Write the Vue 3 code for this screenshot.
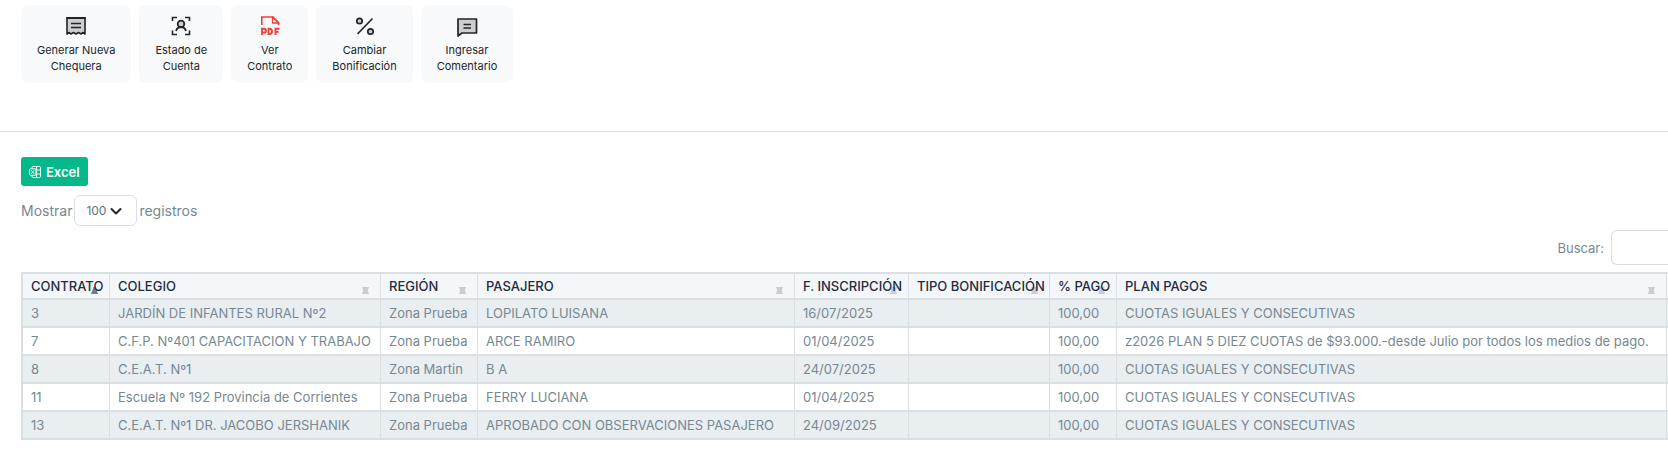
<script setup>
import { ref } from 'vue'

const actions = [
  { id: 'checkbook', lines: ['Generar Nueva', 'Chequera'] },
  { id: 'account', lines: ['Estado de', 'Cuenta'] },
  { id: 'pdf', lines: ['Ver', 'Contrato'] },
  { id: 'percent', lines: ['Cambiar', 'Bonificación'] },
  { id: 'comment', lines: ['Ingresar', 'Comentario'] },
]

const pageSize = ref('100')
const search = ref('')

const columns = [
  { key: 'contrato', label: 'CONTRATO', sorted: true },
  { key: 'colegio', label: 'COLEGIO' },
  { key: 'region', label: 'REGIÓN' },
  { key: 'pasajero', label: 'PASAJERO' },
  { key: 'inscripcion', label: 'F. INSCRIPCIÓN' },
  { key: 'bonificacion', label: 'TIPO BONIFICACIÓN' },
  { key: 'pago', label: '% PAGO' },
  { key: 'plan', label: 'PLAN PAGOS' },
]

const rows = [
  ['3', 'JARDÍN DE INFANTES RURAL Nº2', 'Zona Prueba', 'LOPILATO LUISANA', '16/07/2025', '', '100,00', 'CUOTAS IGUALES Y CONSECUTIVAS'],
  ['7', 'C.F.P. Nº401 CAPACITACION Y TRABAJO', 'Zona Prueba', 'ARCE RAMIRO', '01/04/2025', '', '100,00', 'z2026 PLAN 5 DIEZ CUOTAS de $93.000.-desde Julio por todos los medios de pago.'],
  ['8', 'C.E.A.T. Nº1', 'Zona Martin', 'B A', '24/07/2025', '', '100,00', 'CUOTAS IGUALES Y CONSECUTIVAS'],
  ['11', 'Escuela Nº 192 Provincia de Corrientes', 'Zona Prueba', 'FERRY LUCIANA', '01/04/2025', '', '100,00', 'CUOTAS IGUALES Y CONSECUTIVAS'],
  ['13', 'C.E.A.T. Nº1 DR. JACOBO JERSHANIK', 'Zona Prueba', 'APROBADO CON OBSERVACIONES PASAJERO', '24/09/2025', '', '100,00', 'CUOTAS IGUALES Y CONSECUTIVAS'],
]
</script>

<template>
  <main class="page">
    <nav class="actions" aria-label="Acciones">
      <button v-for="a in actions" :key="a.id" type="button" class="action" :class="a.id">
        <svg v-if="a.id === 'checkbook'" class="icon" viewBox="0 0 24 24" aria-hidden="true">
          <path d="M3 4h18v16l-2-1.5L17 20l-2.500-1.500L12 20l-2.500-1.500L7 20l-2-1.500L3 20z" fill="#cdced2" stroke="#212529" stroke-width="1.600" stroke-linejoin="round" />
          <path d="M2.200 4h19.600" stroke="#212529" stroke-width="2" />
          <path d="M7 9.500h10M7 13.500h10" stroke="#212529" stroke-width="1.600" />
        </svg>
        <svg v-else-if="a.id === 'account'" class="icon" viewBox="0 0 24 24" aria-hidden="true">
          <path d="M3.500 7V3.500H8M16 3.500h4.500V7M3.500 16.500v4H8M16 20.500h4.500v-4" fill="none" stroke="#212529" stroke-width="1.600" />
          <circle cx="12" cy="10" r="3.300" fill="#cdced2" stroke="#212529" stroke-width="1.800" />
          <path d="M7 17c.8-2.500 2.200-4 5-4s4.200 1.500 5 4" fill="none" stroke="#212529" stroke-width="1.800" />
        </svg>
        <svg v-else-if="a.id === 'pdf'" class="icon" viewBox="0 0 24 24" fill="none" stroke="#f93d36" stroke-width="1.900" aria-hidden="true">
          <path d="M3.800 11V3H15l5.500 5.500V11" stroke-width="1.600" />
          <path d="M14.500 3v6h6z" stroke-width="1.300" />
          <path d="M4 21v-6.200h2a1.900 1.900 0 0 1 0 3.800H4M10.500 14.800v5.300h1c3.300 0 3.300-5.300 0-5.300zM17.500 21v-6.200h4M17.500 17.900h3.200" />
        </svg>
        <svg v-else-if="a.id === 'percent'" class="icon" viewBox="0 0 24 24" aria-hidden="true">
          <path d="M19.500 4.500l-15 15.500" stroke="#212529" stroke-width="1.700" />
          <circle cx="6.500" cy="7" r="2.700" fill="#cdced2" stroke="#212529" stroke-width="1.700" />
          <circle cx="17.500" cy="17.500" r="2.700" fill="#cdced2" stroke="#212529" stroke-width="1.700" />
        </svg>
        <svg v-else class="icon" viewBox="0 0 24 24" aria-hidden="true">
          <path d="M3 5h18.500v14H7l-4 3z" fill="#cdced2" stroke="#212529" stroke-width="1.700" stroke-linejoin="round" />
          <path d="M8.500 10.500h7.500M8.500 14h7.500" stroke="#212529" stroke-width="1.700" />
        </svg>
        <span v-for="line in a.lines" :key="line" class="line">{{ line }}</span>
      </button>
    </nav>

    <section class="listing">
      <button type="button" class="excel">
        <svg class="excel-icon" viewBox="0 0 12 12" fill="none" stroke="#fff" aria-hidden="true">
          <path d="M3 2.500v-1q0-1 1-1h6.500q1 0 1 1v9q0 1-1 1H4q-1 0-1-1v-1M7.500.5v11M7.500 4h4M7.500 8h4" stroke-width="0.900" />
          <rect x="0.500" y="2.800" width="6.500" height="6.500" rx="1" />
          <path d="M2.300 4.300l2.900 3.500M5.200 4.300L2.300 7.800" />
        </svg>
        Excel
      </button>

      <div class="length">
        <label for="page-size">Mostrar</label>
        <span class="select-box">
          <select id="page-size" v-model="pageSize">
            <option>10</option>
            <option>25</option>
            <option>50</option>
            <option>100</option>
          </select>
          <svg class="chevron" viewBox="0 0 12 12" fill="none" stroke="#212529" stroke-width="2" stroke-linecap="round" stroke-linejoin="round" aria-hidden="true">
            <path d="M1.500 4L6 8.500 10.500 4" />
          </svg>
        </span>
        <span>registros</span>
      </div>

      <div class="filter">
        <label for="search">Buscar:</label>
        <input id="search" v-model="search" type="search">
      </div>

      <table>
        <colgroup>
          <col v-for="c in columns" :key="c.key" :class="'col-' + c.key">
          <col class="col-edge">
        </colgroup>
        <thead>
          <tr>
            <th v-for="c in columns" :key="c.key" scope="col" :aria-sort="c.sorted ? 'ascending' : 'none'">
              {{ c.label }}
              <svg class="sort" :class="{ sorted: c.sorted }" viewBox="0 0 7 7" aria-hidden="true">
                <path d="M0 7L2.500 0h2L7 7z" />
                <path v-if="!c.sorted" d="M0 0l2.500 7h2L7 0z" />
              </svg>
            </th>
            <td class="edge"></td>
          </tr>
        </thead>
        <tbody>
          <tr v-for="row in rows" :key="row[0]">
            <td v-for="(cell, i) in row" :key="i">{{ cell }}</td>
            <td class="edge"></td>
          </tr>
        </tbody>
      </table>
    </section>
  </main>
</template>

<style>
body {
  background: #fff;
}
</style>

<style scoped>
.page {
  font-family: Inter, "Liberation Sans", sans-serif;
  font-size: 14px;
  line-height: 20px;
  color: #768892;
  overflow: hidden;
}

button,
select,
input {
  font-family: inherit;
  margin: 0;
}

.actions {
  display: flex;
  gap: 8px;
  padding: 5px 21px 48px;
  border-bottom: 1px solid #dcdddf;
}

.action {
  display: flex;
  flex-direction: column;
  align-items: center;
  height: 78px;
  padding: 9px 16px 8px;
  border: 0;
  border-radius: 8px;
  background: #f8f9fb;
  color: #212529;
  font-size: 11px;
  line-height: 16px;
}

.icon {
  width: 24px;
  height: 24px;
  margin-bottom: 4px;
}

.line {
  white-space: nowrap;
}

.listing {
  padding: 25px 0 0 21px;
}

.excel {
  display: flex;
  align-items: center;
  gap: 5px;
  height: 29px;
  padding: 0 8px;
  border: 0;
  border-radius: 3px;
  background: #04b889;
  color: #fff;
  font-size: 13px;
  font-weight: 600;
}

.excel-icon {
  width: 12px;
  height: 12px;
}

.length {
  display: flex;
  align-items: center;
  gap: 2px;
  margin-top: 9px;
}

.select-box {
  position: relative;
  display: flex;
}

select {
  width: 63px;
  height: 31px;
  padding: 0 11px;
  border: 1px solid #dadfe5;
  border-radius: 6px;
  background: #fff;
  color: #64717c;
  font-size: 12px;
  appearance: none;
}

.chevron {
  position: absolute;
  right: 15px;
  top: 10px;
  width: 12px;
  height: 12px;
  pointer-events: none;
}

.filter {
  display: flex;
  align-items: center;
  justify-content: flex-end;
  gap: 7px;
  margin-top: 4px;
  font-size: 13px;
}

input {
  box-sizing: border-box;
  width: 57px;
  height: 35px;
  padding: 0 10px;
  border: 1px solid #dadfe5;
  border-right: 0;
  border-radius: 6px 0 0 6px;
  background: #fff;
  font-size: 13px;
  appearance: none;
}

table {
  table-layout: fixed;
  width: 100%;
  margin-top: 7px;
  border: 2px solid #dadfe3;
  border-width: 2px 0 0 2px;
  border-collapse: separate;
  border-spacing: 0;
}

.col-contrato { width: 87px; }
.col-colegio { width: 271px; }
.col-region { width: 97px; }
.col-pasajero { width: 317px; }
.col-inscripcion { width: 114px; }
.col-bonificacion { width: 141px; }
.col-pago { width: 67px; }
.col-edge { width: 1px; }

th,
td {
  position: relative;
  box-sizing: border-box;
  height: 28px;
  padding: 0 0 0 8px;
  border-right: 1px solid #dadfe3;
  border-bottom: 2px solid #dadfe3;
  font-size: 13px;
  line-height: 20px;
  text-align: left;
  white-space: nowrap;
}

thead th,
thead td {
  height: 26px;
  background: #f3f7fa;
}

th {
  color: #1f2b40;
  font-weight: 500;
}

td.edge {
  padding: 0;
  border-right: 0;
}

tbody tr:nth-child(odd) {
  background: #e9eef1;
}

.sort {
  position: absolute;
  right: 11px;
  bottom: 4px;
  width: 7px;
  height: 7px;
  fill: #1f2b40;
  opacity: 0.2;
}

.sort.sorted {
  opacity: 0.6;
}
</style>
